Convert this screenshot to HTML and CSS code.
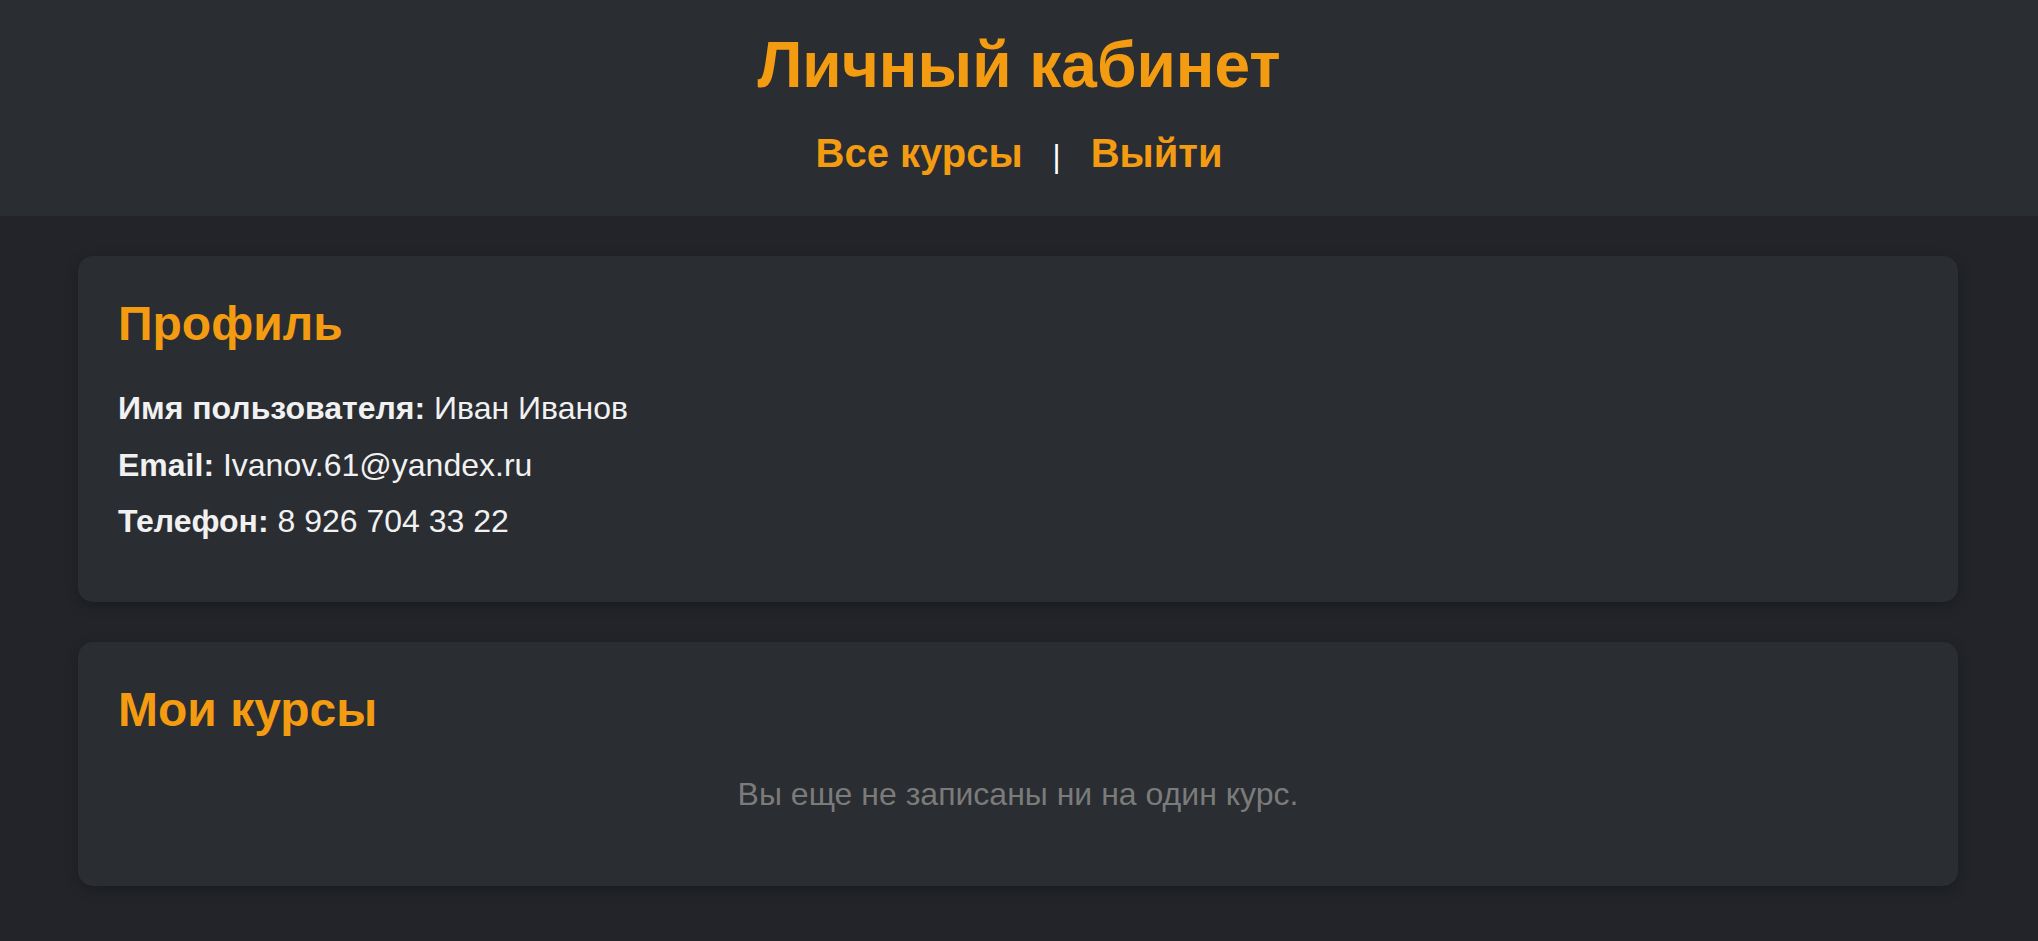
FILE: index.html
```html
<!DOCTYPE html>
<html lang="ru">
<head>
<meta charset="utf-8">
<title>Личный кабинет</title>
<link rel="stylesheet" href="styles.css">
</head>
<body>
<header class="site-header">
  <h1 class="site-title">Личный кабинет</h1>
  <nav class="site-nav">
    <a class="nav-link" href="#">Все курсы</a>
    <span class="nav-sep">|</span>
    <a class="nav-link" href="#">Выйти</a>
  </nav>
</header>
<main class="content">
  <section class="card">
    <h2 class="card-title">Профиль</h2>
    <div class="profile-rows">
      <p class="row"><strong>Имя пользователя:</strong> Иван Иванов</p>
      <p class="row"><strong>Email:</strong> Ivanov.61@yandex.ru</p>
      <p class="row"><strong>Телефон:</strong> 8 926 704 33 22</p>
    </div>
  </section>
  <section class="card card-courses">
    <h2 class="card-title">Мои курсы</h2>
    <p class="empty">Вы еще не записаны ни на один курс.</p>
  </section>
</main>
</body>
</html>
```
FILE: styles.css
```css
html, body {
  margin: 0;
  padding: 0;
}
body {
  background: #222429;
  color: #f1f1f1;
  font-family: "Liberation Sans", Arial, sans-serif;
  min-height: 941px;
}
.site-header {
  background: #2a2d32;
  height: 216px;
  box-sizing: border-box;
  padding-top: 28px;
  text-align: center;
}
.site-title {
  margin: 0;
  font-size: 64px;
  font-weight: 700;
  line-height: normal;
  color: #f39c12;
}
.site-nav {
  margin-top: 29px;
  display: flex;
  justify-content: center;
  align-items: baseline;
  gap: 30px;
}
.nav-link {
  color: #f39c12;
  text-decoration: none;
  font-weight: 700;
  font-size: 40px;
  line-height: normal;
}
.nav-sep {
  color: #ffffff;
  font-size: 31px;
}
.content {
  padding: 40px 80px 40px 78px;
  display: flex;
  flex-direction: column;
  gap: 40px;
}
.card {
  background: #2a2d32;
  border-radius: 15px;
  padding: 40px 40px 62px;
  box-shadow: 0 4px 14px rgba(0, 0, 0, 0.22);
}
.card-title {
  margin: 0;
  font-size: 48px;
  font-weight: 700;
  line-height: normal;
  color: #f39c12;
}
.profile-rows {
  margin-top: 39px;
  display: flex;
  flex-direction: column;
  gap: 19.7px;
}
.row {
  margin: 0;
  font-size: 32px;
  line-height: normal;
  color: #f1f1f1;
}
.row strong {
  font-weight: 700;
}
.card-courses {
  padding-bottom: 40px;
}
.empty {
  margin: 39px 0 33px;
  text-align: center;
  font-size: 32px;
  line-height: normal;
  color: #7b7b7b;
}
```
